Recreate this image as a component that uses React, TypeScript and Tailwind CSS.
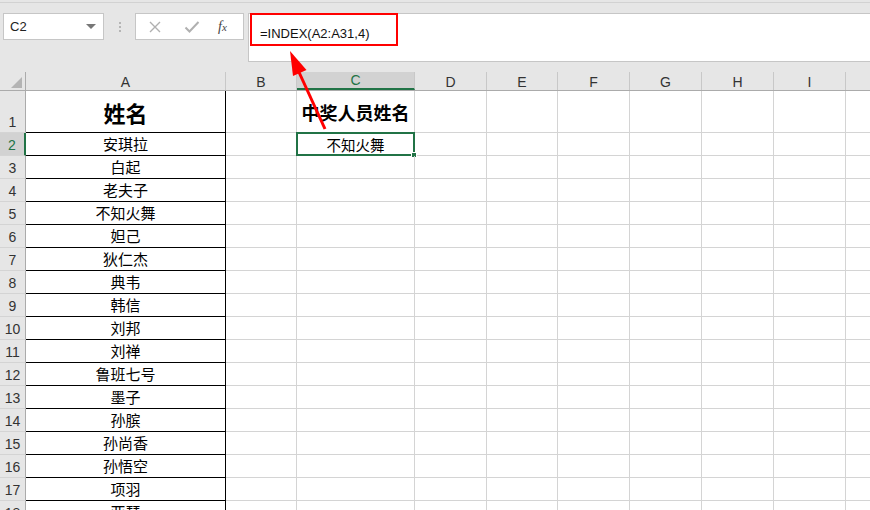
import React from 'react';

const cols = [
  { key: 'A', w: 'w-[200px]' },
  { key: 'B', w: 'w-[71px]' },
  { key: 'C', w: 'w-[118px]' },
  { key: 'D', w: 'w-[72px]' },
  { key: 'E', w: 'w-[71px]' },
  { key: 'F', w: 'w-[72px]' },
  { key: 'G', w: 'w-[72px]' },
  { key: 'H', w: 'w-[72px]' },
  { key: 'I', w: 'w-[72px]' },
  { key: 'J', w: 'w-[72px]' },
];

const names = [
  '安琪拉', '白起', '老夫子', '不知火舞', '妲己', '狄仁杰', '典韦', '韩信',
  '刘邦', '刘禅', '鲁班七号', '墨子', '孙膑', '孙尚香', '孙悟空', '项羽', '亚瑟', '张飞',
];

const latin = { fontFamily: '"Liberation Sans", Arial, sans-serif' };
const cjk = { fontFamily: '"Noto Sans CJK SC", "Noto Sans", sans-serif' };

function Toolbar() {
  return (
    <div className="h-[72px] bg-[#e6e6e6] flex flex-col">
      <div className="h-[2px]" />
      <div className="h-[11px] border-t border-[#d2d2d2]" />
      <div className="h-[49px] flex items-start">
        <div className="ml-[3px] w-[101px] h-[27px] bg-white border border-[#c6c6c6] flex items-center justify-between px-[6px]">
          <span className="text-[13px] text-[#222]" style={latin}>C2</span>
          <svg width="10" height="6" viewBox="0 0 10 6" className="mr-[1px]">
            <path d="M0 0 L10 0 L5 5 Z" fill="#777" />
          </svg>
        </div>
        <div className="w-[31px] h-[27px] flex flex-col items-center justify-center gap-[2px]">
          <div className="w-[2px] h-[2px] bg-[#b5b5b5]" />
          <div className="w-[2px] h-[2px] bg-[#b5b5b5]" />
          <div className="w-[2px] h-[2px] bg-[#b5b5b5]" />
        </div>
        <div className="w-[109px] h-[27px] bg-white border border-[#c6c6c6] flex items-center">
          <svg width="14" height="14" viewBox="0 0 14 14" className="ml-[12px]">
            <path d="M2 2 L12 12 M12 2 L2 12" stroke="#b0b0b0" strokeWidth="1.4" />
          </svg>
          <svg width="16" height="14" viewBox="0 0 16 14" className="ml-[22px]">
            <path d="M1.5 7.5 L5.5 11.5 L14.5 2" stroke="#b0b0b0" strokeWidth="2" fill="none" />
          </svg>
          <span
            className="ml-[18px] text-[14px] italic text-[#444]"
            style={{ fontFamily: '"Liberation Serif", "Times New Roman", serif' }}
          >
            f<span className="text-[11px]">x</span>
          </span>
        </div>
        <div className="ml-[4px] flex-1 h-[49px] bg-white border-l border-t border-b border-[#c6c6c6] pl-[11px] pt-[6px]">
          <span className="text-[13px] text-[#111]" style={latin}>=INDEX(A2:A31,4)</span>
        </div>
      </div>
      <div className="h-[10px]" />
    </div>
  );
}

function HeaderRow() {
  return (
    <div className="flex h-[19px] bg-[#e6e6e6] border-b border-[#ababab]" style={latin}>
      <div className="w-[26px] shrink-0 border-r border-[#ababab] flex items-end justify-end pr-[3px] pb-[2px]">
        <svg width="11" height="11" viewBox="0 0 11 11">
          <path d="M11 0 L11 11 L0 11 Z" fill="#b4b4b4" />
        </svg>
      </div>
      {cols.map((c) => (
        <div
          key={c.key}
          className={`${c.w} shrink-0 flex items-end justify-center text-[14px] leading-[16px] ${
            c.key === 'C'
              ? 'bg-[#d2d2d2] text-[#217346] border-b-2 border-b-[#217346] border-r border-r-[#c8c8c8]'
              : 'text-[#333] border-r border-[#c8c8c8]'
          }`}
        >
          {c.key === 'J' ? '' : c.key}
        </div>
      ))}
    </div>
  );
}

function Row({ n, name }: { n: number; name?: string }) {
  const tall = n === 1;
  const selectedRow = n === 2;
  return (
    <div className={`flex ${tall ? 'h-[42px]' : 'h-[23px]'}`}>
      <div
        className={`w-[26px] shrink-0 flex items-end justify-center text-[14px] leading-[20px] ${
          selectedRow
            ? 'bg-[#d2d2d2] text-[#217346] border-r-2 border-[#217346]'
            : 'bg-[#e6e6e6] text-[#333] border-r border-[#ababab]'
        } border-b border-b-[#d4d4d4]`}
        style={latin}
      >
        {n}
      </div>
      {cols.map((c) => {
        if (c.key === 'A') {
          return (
            <div
              key={c.key}
              className={`${c.w} shrink-0 border-r border-b border-black flex items-center justify-center text-black ${
                tall ? 'text-[22px] font-bold pt-[2px]' : 'text-[15px] pt-[1px]'
              }`}
              style={cjk}
            >
              {tall ? '姓名' : name}
            </div>
          );
        }
        if (c.key === 'C') {
          return (
            <div
              key={c.key}
              className={`${c.w} shrink-0 relative border-r border-b border-[#d4d4d4] flex items-center justify-center text-black ${
                tall ? 'text-[18px] font-bold pt-[2px]' : 'text-[14.5px] pt-[1px]'
              }`}
              style={cjk}
            >
              {tall ? '中奖人员姓名' : n === 2 ? '不知火舞' : ''}
              {n === 2 && (
                <div className="absolute -top-[1px] -left-[1px] w-[119px] h-[24px] border-2 border-[#217346]">
                  <div className="absolute -right-[4px] -bottom-[4px] w-[6px] h-[6px] bg-[#217346] border border-white" />
                </div>
              )}
            </div>
          );
        }
        return <div key={c.key} className={`${c.w} shrink-0 border-r border-b border-[#d4d4d4]`} />;
      })}
    </div>
  );
}

export default function App() {
  return (
    <div className="w-[870px] h-[510px] overflow-hidden bg-white relative">
      <Toolbar />
      <HeaderRow />
      <Row n={1} />
      {names.map((name, i) => (
        <Row key={i} n={i + 2} name={name} />
      ))}

      {/* red highlight around formula */}
      <div className="absolute left-[250px] top-[13px] w-[148px] h-[33px] border-2 border-[#ff0000]" />

      {/* red arrow */}
      <svg className="absolute left-0 top-0 pointer-events-none" width="870" height="510">
        <line x1="325" y1="129" x2="298" y2="70" stroke="#ff0000" strokeWidth="3" />
        <polygon points="290,51 306.5,70 293,76" fill="#ff0000" />
      </svg>
    </div>
  );
}
